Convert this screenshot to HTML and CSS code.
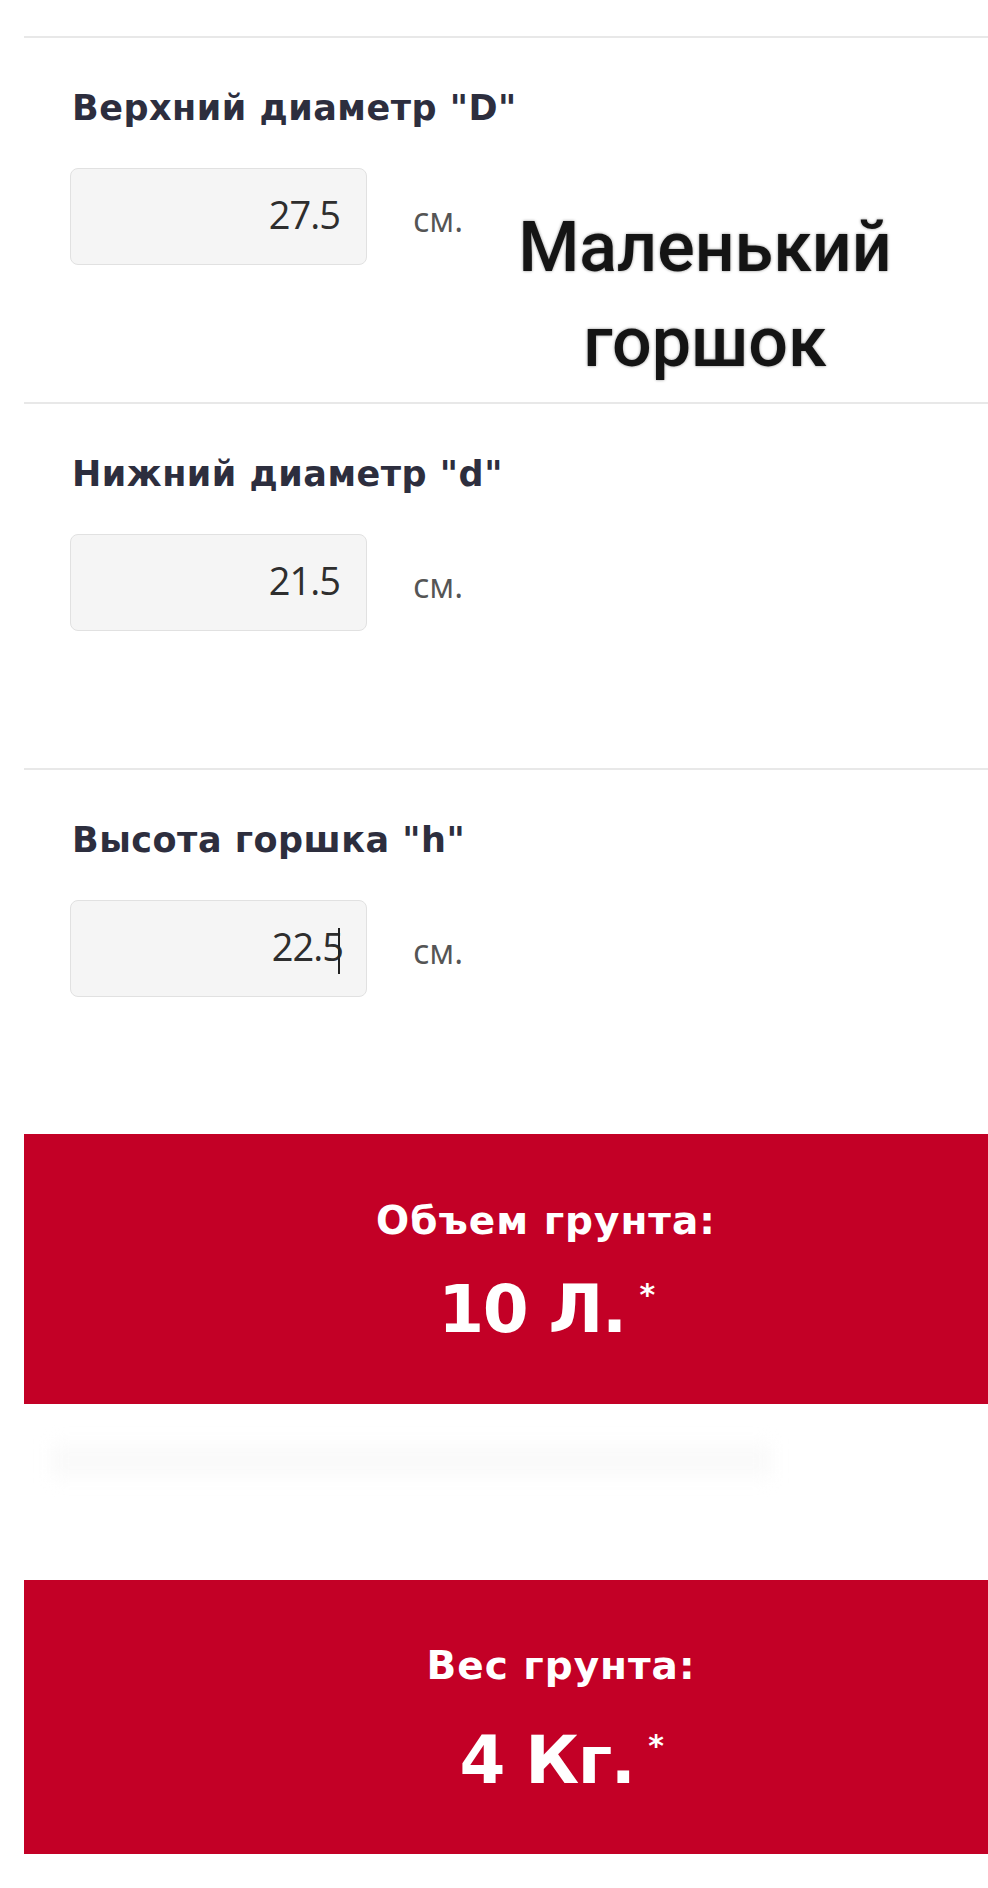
FILE: index.html
```html
<!DOCTYPE html>
<html lang="ru">
<head>
<meta charset="utf-8">
<title>Калькулятор грунта</title>
<link rel="stylesheet" href="styles.css">
</head>
<body>
<div class="page">
  <section class="field">
    <div class="label">Верхний диаметр "D"</div>
    <div class="row">
      <div class="input">27.5</div>
      <span class="unit">см.</span>
    </div>
  </section>
  <section class="field">
    <div class="label">Нижний диаметр "d"</div>
    <div class="row">
      <div class="input">21.5</div>
      <span class="unit">см.</span>
    </div>
  </section>
  <section class="field">
    <div class="label">Высота горшка "h"</div>
    <div class="row">
      <div class="input">22.5<span class="caret"></span></div>
      <span class="unit">см.</span>
    </div>
  </section>
  <div class="result">
    <div class="result-title">Объем грунта:</div>
    <div class="result-value">10 Л.<span class="star">*</span></div>
  </div>
  <div class="ghost"></div>
  <div class="result second">
    <div class="result-title">Вес грунта:</div>
    <div class="result-value">4 Кг.<span class="star">*</span></div>
  </div>
</div>
<div class="note">Маленький<br>горшок</div>
</body>
</html>
```

FILE: styles.css
```css
html, body {
  margin: 0;
  padding: 0;
  background: #ffffff;
  overflow-x: hidden;
}

.page {
  padding: 36px 0 0 24px;
}

.field {
  box-sizing: border-box;
  height: 366px;
  border-top: 2px solid #e8e8e8;
  padding: 50px 0 0 46px;
}

.label {
  font-family: "DejaVu Sans", sans-serif;
  font-weight: 700;
  font-size: 35px;
  line-height: 40px;
  letter-spacing: 0.5px;
  color: #2d2e3e;
  padding-left: 2px;
}

.row {
  display: flex;
  align-items: center;
  margin-top: 40px;
}

.input {
  box-sizing: border-box;
  width: 297px;
  height: 97px;
  background: #f5f5f5;
  border: 1px solid #e1e1e1;
  border-radius: 8px;
  display: flex;
  align-items: center;
  justify-content: flex-end;
  padding: 0 26px 6px 0;
  font-family: "Open Sans", sans-serif;
  font-size: 38px;
  color: #2e2e2e;
  letter-spacing: -1px;
}

.caret {
  display: inline-block;
  width: 2px;
  height: 46px;
  background: #222;
  margin-left: -5px;
  margin-top: 10px;
}

.unit {
  font-family: "Open Sans", sans-serif;
  font-size: 34px;
  color: #555555;
  margin-left: 46px;
  padding-top: 4px;
}

.result {
  box-sizing: border-box;
  height: 270px;
  background: #c30026;
  padding: 65px 0 0 80px;
  text-align: center;
  color: #ffffff;
  font-family: "DejaVu Sans", sans-serif;
  font-weight: 700;
}

.result.second {
  height: 274px;
  padding-left: 110px;
  padding-top: 64px;
}

.result-title {
  font-size: 39px;
  line-height: 44px;
  letter-spacing: 1px;
}

.result-value {
  font-size: 66px;
  line-height: 80px;
  margin-top: 27px;
  letter-spacing: -1.5px;
}

.second .result-value {
  margin-top: 33px;
}

.star {
  display: inline-block;
  vertical-align: top;
  font-size: 30px;
  line-height: 50px;
  margin-left: 14px;
}

.ghost {
  height: 176px;
  box-sizing: border-box;
  padding-top: 40px;
  display: flex;
  justify-content: center;
}

.ghost::before {
  content: "";
  display: block;
  width: 720px;
  height: 34px;
  margin-left: -190px;
  background: #fafafa;
  filter: blur(8px);
}

.note {
  position: absolute;
  left: 455px;
  top: 200px;
  width: 500px;
  text-align: center;
  font-family: Roboto, "Noto Sans", sans-serif;
  font-weight: 500;
  font-size: 70px;
  line-height: 95px;
  color: #141414;
  text-shadow: 0 0 3px rgba(0, 0, 0, 0.45);
}
```
